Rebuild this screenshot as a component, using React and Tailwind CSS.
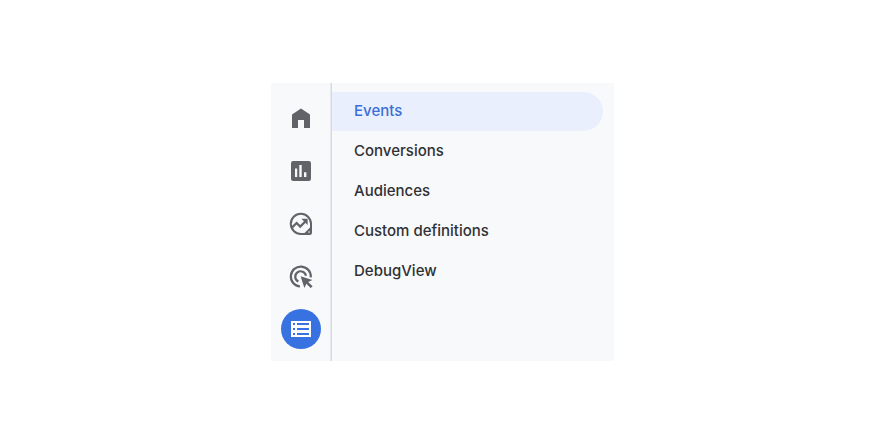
import { useState } from 'react'

function HomeIcon() {
  return (
    <svg viewBox="0 0 24 24" className="h-6 w-6" fill="currentColor" aria-hidden="true">
      <path d="M3 23V9.6L12 3.4l9 6.2V23h-6v-8H9v8z" />
    </svg>
  )
}

function ReportsIcon() {
  return (
    <svg viewBox="0 0 24 24" className="h-6 w-6" fill="currentColor" aria-hidden="true">
      <rect x="2" y="3" width="20" height="20" rx="2.2" />
      <path fill="#f8f9fb" d="M6 10.4h2.2V19H6zM10.3 7h2.4v12h-2.4zM15 14.2h2.4V19H15z" />
    </svg>
  )
}

function ExploreIcon() {
  return (
    <svg viewBox="0 0 24 24" className="h-6 w-6" fill="none" stroke="currentColor" strokeWidth="2" aria-hidden="true">
      <path d="M22 12.8a10.1 10.1 0 1 0-10.1 10.2H20.8a1.2 1.2 0 0 0 1.2-1.2z" />
      <path d="M22 15.5 14.5 23H20.8a1.2 1.2 0 0 0 1.2-1.2z" fill="currentColor" stroke="none" />
      <path d="M3.2 16.4l4.4-4.4 3.6 3.6 5.4-5.4" strokeWidth="2.2" />
      <path d="M12.4 7.8h6.2V14z" fill="currentColor" stroke="none" />
      <circle cx="20" cy="21" r="0.9" fill="#c3c5c8" stroke="none" />
    </svg>
  )
}

function AdvertisingIcon() {
  return (
    <svg viewBox="0 0 24 24" className="h-6 w-6" fill="none" stroke="currentColor" strokeWidth="2.2" aria-hidden="true">
      <path d="M11 22.5a10 10 0 1 1 10.8-9.2" />
      <path d="M9.4 17.6a5.4 5.4 0 1 1 7.6-5.8" />
      <path d="M11.6 12.2l11.8 3.8-4.2 2 4.4 4.2-1.9 1.9-4.3-4.4-2 4.2z" fill="currentColor" stroke="none" />
    </svg>
  )
}

function ConfigureIcon() {
  return (
    <svg viewBox="0 0 24 24" className="h-6 w-6" fill="currentColor" aria-hidden="true">
      <path
        fillRule="evenodd"
        d="M2 4h20v16H2zM4 6v2h2V6zM8 6v2h12V6zM4 11v2h2v-2zM8 11v2h12v-2zM4 16v2h2v-2zM8 16v2h12v-2z"
      />
    </svg>
  )
}

const SECTIONS = [
  { name: 'Home', Icon: HomeIcon },
  { name: 'Reports', Icon: ReportsIcon },
  { name: 'Explore', Icon: ExploreIcon },
  { name: 'Advertising', Icon: AdvertisingIcon },
  { name: 'Configure', Icon: ConfigureIcon }
]

const PAGES = ['Events', 'Conversions', 'Audiences', 'Custom definitions', 'DebugView']

export default function App() {
  const [section, setSection] = useState('Configure')
  const [page, setPage] = useState('Events')

  return (
    <div className="flex min-h-screen items-start justify-center bg-white pt-[83px] pr-[11px] font-['Inter',sans-serif]">
      <div className="flex w-full max-w-[343px] bg-[#f8f9fb]">
        <nav aria-label="Sections" className="flex flex-col gap-[13px] border-r border-[#e6e8eb] pt-3.5 pr-[9px] pb-3 pl-2.5">
          {SECTIONS.map(({ name, Icon }) => (
            <button
              key={name}
              type="button"
              aria-label={name}
              onClick={() => setSection(name)}
              className={`flex h-10 w-10 items-center justify-center rounded-full ${
                section === name ? 'bg-[#3871e0] text-white' : 'text-[#606368]'
              }`}
            >
              <Icon />
            </button>
          ))}
        </nav>

        <nav aria-label="Pages" className="flex flex-1 flex-col gap-px border-l border-[#d8dadd] pt-[9px] pr-[11px]">
          {PAGES.map(name => (
            <a
              key={name}
              href="#"
              onClick={() => setPage(name)}
              className={`flex h-[39px] items-center rounded-r-full pl-[22px] text-[15px] font-medium ${
                page === name ? 'bg-[#e9effd] text-[#3b6ed8]' : 'text-[#303134]'
              }`}
            >
              {name}
            </a>
          ))}
        </nav>
      </div>
    </div>
  )
}
